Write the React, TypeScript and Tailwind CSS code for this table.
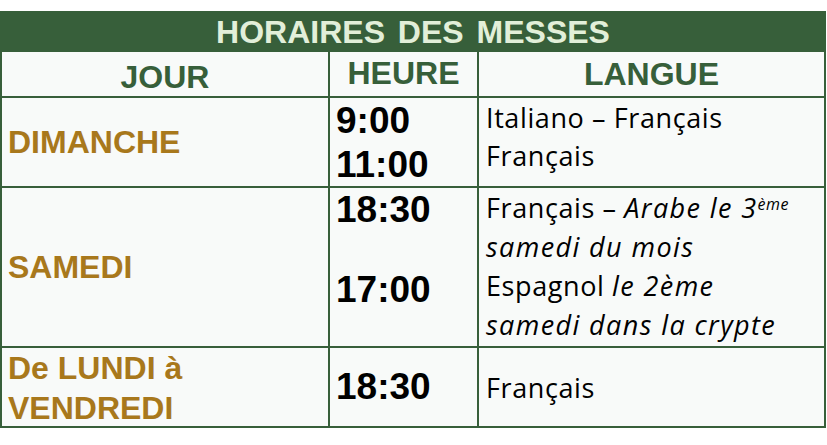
import React from "react";

const arial = "font-['Liberation_Sans',Arial,sans-serif]";
const body = "font-['Open_Sans','Noto_Sans',sans-serif]";

export default function App() {
  return (
    <div className="w-[827px] h-[445px] bg-white pt-[11px]">
      <div className="w-[826px] grid grid-cols-[326px_147px_345px] gap-[2px] bg-[#375f3a] px-[2px] pb-[2px]">
        {/* Title */}
        <div
          className={`col-span-3 h-[39px] pt-[2px] text-center text-[32px] leading-[39px] font-bold text-[#e2efd9] ${arial} [word-spacing:4px]`}
        >
          HORAIRES DES MESSES
        </div>

        {/* Header row */}
        <div className={`h-[44px] bg-[#f8faf9] pt-[6px] text-center text-[32px] leading-[38px] font-bold text-[#375f3a] ${arial}`}>
          JOUR
        </div>
        <div className={`h-[44px] bg-[#f8faf9] pt-[2px] text-center text-[32px] leading-[38px] font-bold text-[#375f3a] ${arial}`}>
          HEURE
        </div>
        <div className={`h-[44px] bg-[#f8faf9] pt-[3px] text-center text-[32px] leading-[38px] font-bold text-[#375f3a] ${arial}`}>
          LANGUE
        </div>

        {/* Dimanche */}
        <div className={`h-[88px] bg-[#f8faf9] pl-[6px] flex items-center text-[32px] leading-none font-bold text-[#a8781c] ${arial}`}>
          DIMANCHE
        </div>
        <div className={`h-[88px] bg-[#f8faf9] pl-[6px] pt-[1px] text-[37px] leading-[44px] font-bold text-black ${arial}`}>
          <div>9:00</div>
          <div>11:00</div>
        </div>
        <div className={`h-[88px] bg-[#f8faf9] pl-[7px] pt-[1px] text-[27px] leading-[38px] tracking-[0.6px] text-black ${body}`}>
          <div>Italiano – Français</div>
          <div>Français</div>
        </div>

        {/* Samedi */}
        <div className={`h-[158px] bg-[#f8faf9] pl-[6px] flex items-center text-[32px] leading-none font-bold text-[#a8781c] ${arial}`}>
          SAMEDI
        </div>
        <div className={`h-[158px] bg-[#f8faf9] pl-[6px] text-[37px] leading-[44px] font-bold text-black ${arial}`}>
          <div>18:30</div>
          <div className="mt-[36px]">17:00</div>
        </div>
        <div className={`h-[158px] bg-[#f8faf9] pl-[7px] text-[27px] leading-[39px] tracking-[0.6px] text-black ${body}`}>
          <div className="whitespace-nowrap">
            Français – <i className="tracking-[1.4px]">Arabe le 3<sup className="text-[16px] tracking-[0.5px]">ème</sup></i>
          </div>
          <div>
            <i className="tracking-[1.4px]">samedi du mois</i>
          </div>
          <div>
            Espagnol <i className="tracking-[1.4px]">le 2ème</i>
          </div>
          <div>
            <i className="tracking-[1.4px]">samedi dans la crypte</i>
          </div>
        </div>

        {/* Lundi - Vendredi */}
        <div className={`h-[78px] bg-[#f8faf9] pl-[6px] text-[32px] leading-[40px] font-bold text-[#a8781c] ${arial}`}>
          <div>De LUNDI à</div>
          <div>VENDREDI</div>
        </div>
        <div className={`h-[78px] bg-[#f8faf9] pl-[6px] flex items-center text-[37px] leading-[44px] font-bold text-black ${arial}`}>
          18:30
        </div>
        <div className={`h-[78px] bg-[#f8faf9] pl-[7px] flex items-center text-[27px] leading-[39px] tracking-[0.6px] text-black ${body}`}>
          Français
        </div>
      </div>
    </div>
  );
}
